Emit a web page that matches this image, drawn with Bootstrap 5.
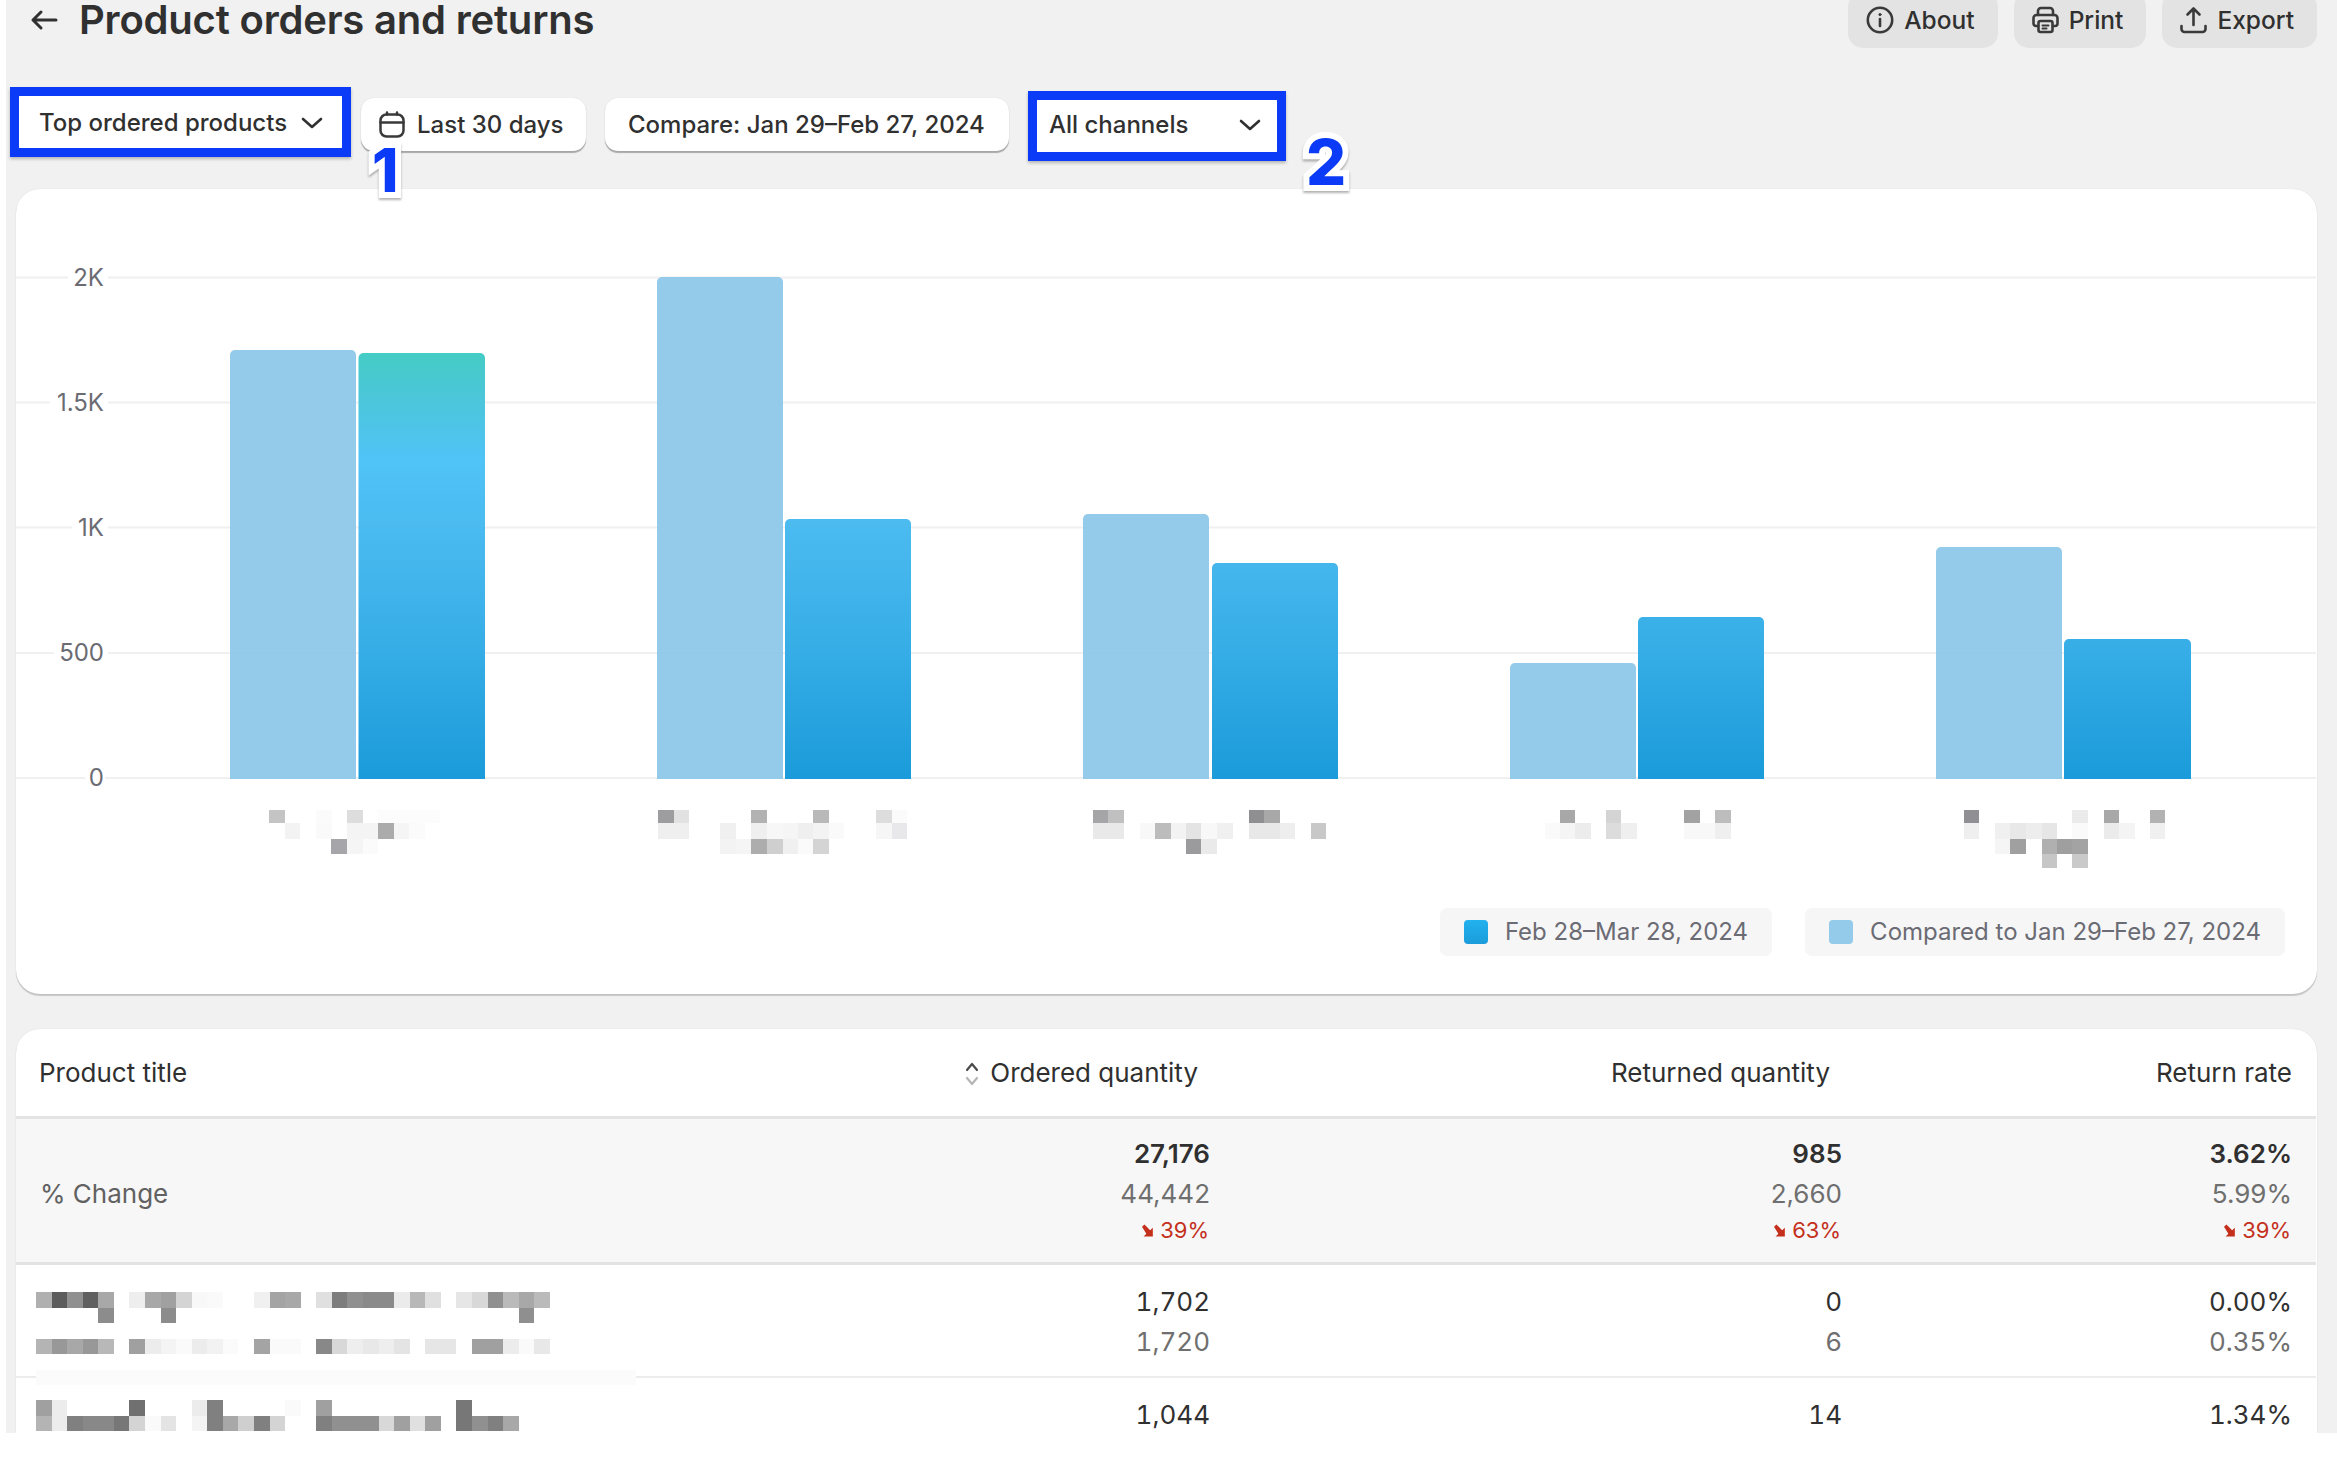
<!DOCTYPE html>
<html lang="en">
<head>
<meta charset="utf-8">
<title>Product orders and returns</title>
<link href="https://cdn.jsdelivr.net/npm/bootstrap@5.3.0/dist/css/bootstrap.min.css" rel="stylesheet">
<style>
html,body{height:100%;overflow:hidden;background:#fff;}
body{font-family:Inter,"Liberation Sans",sans-serif;color:#303030;}
.page-wrap{margin-left:6px;height:1433px;overflow:hidden;background:#f1f1f1;padding:0 20px 0 10px;}
.title-row{margin-top:-8px;height:56px;}
.back-icon{margin-left:14px;margin-right:21px;}
.page-title{font-size:40px;font-weight:600;letter-spacing:-.2px;margin:0;line-height:56px;color:#303030;}
.top-actions{gap:16px;}
.top-btn{background:#e3e3e3;border:0;border-radius:15px;height:56px;padding:0 23px 0 18px;font-size:24.5px;font-weight:500;color:#303030;line-height:32px;gap:10px;display:flex;align-items:center;}
.top-btn:hover{background:#e3e3e3;color:#303030;}
.filter-row{margin-top:39px;height:74px;margin-left:-6px;margin-bottom:28px;position:relative;}
.blue-frame{border:9px solid #0b3bf6;box-shadow:0 2px 3px rgba(0,0,0,.25);height:70px;}
.frame-one{width:341px;margin-right:10px;}
.frame-two{width:258px;margin-top:4px;margin-left:19px;}
.white-btn{background:#fff;border:0;border-radius:13px;box-shadow:0 2px 1px rgba(0,0,0,.3),0 0 1px rgba(0,0,0,.15);height:52px;padding:0 20px;font-size:24px;font-weight:500;color:#303030;display:flex;align-items:center;white-space:nowrap;}
.white-btn:hover{background:#fff;color:#303030;}
.frame-one .white-btn,.frame-two .white-btn{width:100%;height:52px;justify-content:space-between;box-shadow:none;border-radius:3px;}
.frame-one .white-btn{padding:2px 19px 0 20px;}
.frame-two .white-btn{padding:0 16px 2px 12px;}
.date-btn{margin-top:11px;width:225px;padding-left:18px;gap:12px;height:53px;}
.compare-btn{margin-top:11px;margin-left:19px;width:404px;height:53px;padding:0 0 0 23px;}
.anno-num{position:absolute;color:#0b3bf6;font-weight:800;-webkit-text-stroke:12px #fff;paint-order:stroke fill;filter:drop-shadow(0 2px 1px rgba(0,0,0,.3));line-height:1;font-family:Inter,"Liberation Sans",sans-serif;}
.anno-one{left:362px;top:53px;font-size:60px;}
.anno-two{left:1296px;top:44px;font-size:63px;}
.sheet{background:#fff;border-radius:24px;box-shadow:0 2px 1px rgba(0,0,0,.18),0 0 1px rgba(0,0,0,.15);overflow:hidden;}
.chart-sheet{height:805px;}
.chart-svg{display:block;width:2300px;height:700px;}
.axis-text{font-family:Inter,"Liberation Sans",sans-serif;font-size:24px;fill:#6b6b73;}
.legend-row{gap:33px;padding-right:32px;margin-top:19px;}
.legend-chip{background:#f6f6f7;border-radius:7px;height:48px;display:flex;align-items:center;font-size:24px;color:#6b6b73;padding:0 24px;gap:17px;}
.swatch{width:24px;height:24px;border-radius:4px;flex:none;}
.swatch-now{background:linear-gradient(#22b2ee,#1b9cdb);}
.swatch-prev{background:#94cbea;}
.table-sheet{margin-top:35px;height:520px;}
.data-table{--bs-table-bg:transparent;--bs-table-color:#303030;margin:0;table-layout:fixed;width:2300px;font-size:26px;}
.col-name{width:700px;}
.col-ordered{width:510px;}
.col-returned{width:632px;}
.col-rate{width:458px;}
.data-table th{font-weight:400;height:88px;vertical-align:middle;border-bottom:3px solid #e3e3e3;padding:0;}
.data-table td{padding:0;vertical-align:middle;border-bottom:2px solid #ececec;line-height:40px;}
.data-table .first-cell{padding-left:23px;}
.data-table .mosaic-cell{padding-left:20px;}
.data-table .num-a{padding-right:16px;}
.data-table .num-b{padding-right:16px;}
.data-table .num-c{padding-right:24px;}
.data-table th.num-a,.data-table th.num-b{padding-right:28px;}
.data-table .sum-row td{background:#f7f7f7;height:146px;border-bottom-width:3px;border-color:#e3e3e3;}
.data-table .sum-row .sum-label{color:#616161;padding-top:8px;padding-left:24px;}
.data-table .item-row td{height:114px;vertical-align:top;padding-top:17px;font-variant-numeric:tabular-nums;}
.prev-val{color:#6f6f6f;}
.strong-val{font-weight:600;}
.delta{color:#c4301c;font-size:22px;line-height:32px;display:flex;justify-content:flex-end;align-items:center;gap:5px;margin-right:1px;}
.mosaic{display:block;width:545px;height:62px;margin-top:10px;overflow:visible;}
.mosaic-b{height:31px;margin-top:5px;}
.sort-icon{margin-right:11px;vertical-align:-4px;}
</style>
</head>
<body>
<div class="page-wrap">
  <div class="d-flex justify-content-between align-items-start title-row">
    <div class="d-flex align-items-center">
      <svg class="back-icon" width="28" height="24" viewBox="0 0 28 24" fill="none" stroke="#303030" stroke-width="3" stroke-linecap="round" stroke-linejoin="round" aria-hidden="true"><path d="M26 12H3M11 4l-8 8 8 8"/></svg>
      <h1 class="page-title">Product orders and returns</h1>
    </div>
    <div class="d-flex top-actions">
      <button class="btn top-btn" type="button"><svg width="28" height="28" viewBox="0 0 28 28" fill="none" stroke="#3a3a3a" stroke-width="2.6" stroke-linecap="round" aria-hidden="true"><circle cx="14" cy="14" r="12.2"/><path d="M14 13v7"/><circle cx="14" cy="8.6" r="1.1" fill="#3a3a3a" stroke-width="1"/></svg>About</button>
      <button class="btn top-btn" type="button"><svg width="27" height="28" viewBox="0 0 27 28" fill="none" stroke="#3a3a3a" stroke-width="2.6" stroke-linejoin="round" stroke-linecap="round" aria-hidden="true"><path d="M6 9V5a3 3 0 0 1 3-3h9a3 3 0 0 1 3 3v4"/><path d="M6 20H4a2.5 2.5 0 0 1-2.5-2.5V12A3 3 0 0 1 4.500 9h18a3 3 0 0 1 3 3v5.500A2.500 2.500 0 0 1 23 20h-2"/><rect x="6.500" y="15" width="14" height="11" rx="2"/><path d="M10.500 19.500h6M10.500 22.500h4" stroke-width="2"/></svg>Print</button>
      <button class="btn top-btn" type="button"><svg width="27" height="28" viewBox="0 0 27 28" fill="none" stroke="#3a3a3a" stroke-width="2.6" stroke-linecap="round" stroke-linejoin="round" aria-hidden="true"><path d="M13.500 19V2.500M7.500 8.500l6-6 6 6"/><path d="M1.500 20v3a3 3 0 0 0 3 3h18a3 3 0 0 0 3-3v-3"/></svg>Export</button>
    </div>
  </div>

  <div class="d-flex align-items-start filter-row">
    <div class="blue-frame frame-one"><button class="btn white-btn" type="button">Top ordered products<svg width="22" height="12" viewBox="0 0 22 12" fill="none" stroke="#303030" stroke-width="2.6" stroke-linecap="round" stroke-linejoin="round" aria-hidden="true"><path d="M2 2l9 8 9-8"/></svg></button></div>
    <button class="btn white-btn date-btn" type="button"><svg width="26" height="27" viewBox="0 0 26 27" fill="none" stroke="#3a3a3a" stroke-width="2.5" stroke-linecap="round" aria-hidden="true"><rect x="1.500" y="3.500" width="23" height="22" rx="6"/><path d="M1.500 11.500h23M8 1.500v2M18 1.500v2"/></svg>Last 30 days</button>
    <button class="btn white-btn compare-btn" type="button">Compare: Jan 29–Feb 27, 2024</button>
    <div class="blue-frame frame-two"><button class="btn white-btn" type="button">All channels<svg width="22" height="12" viewBox="0 0 22 12" fill="none" stroke="#303030" stroke-width="2.6" stroke-linecap="round" stroke-linejoin="round" aria-hidden="true"><path d="M2 2l9 8 9-8"/></svg></button></div>
    <span class="anno-num anno-one">1</span>
    <span class="anno-num anno-two">2</span>
  </div>

  <div class="sheet chart-sheet">
    <svg class="chart-svg" viewBox="16 189 2300 700" aria-label="Bar chart">
      <defs>
        <linearGradient id="barFill" gradientUnits="userSpaceOnUse" x1="0" y1="353" x2="0" y2="778">
          <stop offset="0" stop-color="#45ccc5"/>
          <stop offset=".11" stop-color="#4bc6da"/>
          <stop offset=".25" stop-color="#50c3f7"/>
          <stop offset=".4" stop-color="#4bbbf0"/>
          <stop offset=".7" stop-color="#36ade6"/>
          <stop offset="1" stop-color="#1b9bda"/>
        </linearGradient>
        <clipPath id="plotClip"><rect x="16" y="189" width="2300" height="590"/></clipPath>
      </defs>
      <g stroke="#f0f0f1" stroke-width="2">
        <path d="M16 277.500H2316M16 402.500H2316M16 527.500H2316M16 653H2316M16 778H2316"/>
      </g>
      <g clip-path="url(#plotClip)">
        <g fill="#8cc7e8" fill-opacity=".93">
          <rect x="230" y="350" width="126" height="440" rx="5"/>
          <rect x="657" y="277" width="126" height="520" rx="5"/>
          <rect x="1083" y="514" width="126" height="280" rx="5"/>
          <rect x="1510" y="663" width="126" height="130" rx="5"/>
          <rect x="1936" y="547" width="126" height="250" rx="5"/>
        </g>
        <g fill="url(#barFill)">
          <rect x="358.500" y="353" width="126.500" height="440" rx="5"/>
          <rect x="785" y="519" width="126" height="280" rx="5"/>
          <rect x="1212" y="563" width="126" height="240" rx="5"/>
          <rect x="1638" y="617" width="126" height="180" rx="5"/>
          <rect x="2064" y="639" width="127" height="160" rx="5"/>
        </g>
      </g>
      <g fill="#fff">
        <rect x="68" y="264" width="40" height="28"/>
        <rect x="50" y="389" width="58" height="28"/>
        <rect x="72" y="514" width="36" height="28"/>
        <rect x="54" y="640" width="54" height="28"/>
        <rect x="85" y="764" width="20" height="28"/>
      </g>
      <g class="axis-text" text-anchor="end">
        <text x="104" y="286">2K</text>
        <text x="104" y="411">1.5K</text>
        <text x="104" y="536">1K</text>
        <text x="104" y="661">500</text>
        <text x="104" y="786">0</text>
      </g>
      <!-- blurred product names -->
      <g shape-rendering="crispEdges">
        <g>
          <rect x="269" y="810" width="16" height="13" fill="#c4c4c4"/><rect x="316" y="810" width="16" height="13" fill="#fbfbfb"/><rect x="347" y="810" width="16" height="13" fill="#ddd"/><rect x="378" y="810" width="62" height="13" fill="#fcfcfc"/>
          <rect x="285" y="823" width="15" height="16" fill="#f3f3f4"/><rect x="316" y="823" width="16" height="16" fill="#fafafa"/><rect x="347" y="823" width="31" height="16" fill="#f4f4f5"/><rect x="378" y="823" width="16" height="16" fill="#ababab"/><rect x="394" y="823" width="15" height="16" fill="#f5f5f5"/><rect x="409" y="823" width="16" height="16" fill="#fbfbfb"/>
          <rect x="331" y="839" width="16" height="15" fill="#a5a5aa"/><rect x="347" y="839" width="16" height="15" fill="#f5f5f5"/><rect x="363" y="839" width="15" height="15" fill="#fbfbfb"/>
        </g>
        <g>
          <rect x="658" y="810" width="16" height="13" fill="#9d9da0"/><rect x="674" y="810" width="15" height="13" fill="#e2e2e2"/><rect x="751" y="810" width="16" height="13" fill="#b2b2b2"/><rect x="813" y="810" width="16" height="13" fill="#b9b9b9"/><rect x="876" y="810" width="16" height="13" fill="#ddd"/><rect x="892" y="810" width="15" height="13" fill="#fbfbfb"/>
          <rect x="658" y="823" width="31" height="16" fill="#efefef"/><rect x="720" y="823" width="16" height="16" fill="#f0f0f0"/><rect x="751" y="823" width="16" height="16" fill="#efefef"/><rect x="767" y="823" width="16" height="16" fill="#f7f7f7"/><rect x="783" y="823" width="15" height="16" fill="#f5f5f5"/><rect x="798" y="823" width="15" height="16" fill="#efefef"/><rect x="813" y="823" width="16" height="16" fill="#f3f3f3"/><rect x="829" y="823" width="15" height="16" fill="#fafafa"/><rect x="876" y="823" width="16" height="16" fill="#f6f6f6"/><rect x="892" y="823" width="15" height="16" fill="#e8e8ea"/>
          <rect x="720" y="839" width="16" height="15" fill="#f3f3f3"/><rect x="736" y="839" width="15" height="15" fill="#f5f5f5"/><rect x="751" y="839" width="16" height="15" fill="#adadad"/><rect x="767" y="839" width="16" height="15" fill="#cfcfcf"/><rect x="783" y="839" width="15" height="15" fill="#f0f0f0"/><rect x="798" y="839" width="15" height="15" fill="#fafafa"/><rect x="813" y="839" width="16" height="15" fill="#d4d4d4"/>
        </g>
        <g>
          <rect x="1093" y="810" width="15" height="13" fill="#a5a5a8"/><rect x="1108" y="810" width="16" height="13" fill="#c0c0c0"/><rect x="1249" y="810" width="15" height="13" fill="#8f8f92"/><rect x="1264" y="810" width="16" height="13" fill="#a8a8a8"/>
          <rect x="1093" y="823" width="31" height="16" fill="#e9e9e9"/><rect x="1140" y="823" width="15" height="16" fill="#f8f8f8"/><rect x="1155" y="823" width="16" height="16" fill="#bcbcbc"/><rect x="1171" y="823" width="15" height="16" fill="#f3f3f3"/><rect x="1186" y="823" width="15" height="16" fill="#e4e4e4"/><rect x="1201" y="823" width="16" height="16" fill="#f8f8f8"/><rect x="1217" y="823" width="16" height="16" fill="#f0f0f0"/><rect x="1249" y="823" width="31" height="16" fill="#e8e8e8"/><rect x="1280" y="823" width="15" height="16" fill="#eee"/><rect x="1311" y="823" width="15" height="16" fill="#c8c8c8"/>
          <rect x="1186" y="839" width="15" height="15" fill="#9b9b9e"/><rect x="1201" y="839" width="16" height="15" fill="#eaeaea"/>
        </g>
        <g>
          <rect x="1560" y="810" width="15" height="13" fill="#a8a8a8"/><rect x="1606" y="810" width="15" height="13" fill="#d4d4d4"/><rect x="1684" y="810" width="16" height="13" fill="#a2a2a2"/><rect x="1715" y="810" width="16" height="13" fill="#bdbdbd"/>
          <rect x="1545" y="823" width="15" height="16" fill="#fafafa"/><rect x="1560" y="823" width="15" height="16" fill="#f5f5f5"/><rect x="1575" y="823" width="16" height="16" fill="#ececec"/><rect x="1606" y="823" width="15" height="16" fill="#dcdcdc"/><rect x="1621" y="823" width="16" height="16" fill="#efefef"/><rect x="1684" y="823" width="31" height="16" fill="#f8f8f8"/><rect x="1715" y="823" width="16" height="16" fill="#efefef"/>
        </g>
        <g>
          <rect x="1964" y="810" width="15" height="13" fill="#8f8f94"/><rect x="2072" y="810" width="16" height="13" fill="#ebebeb"/><rect x="2104" y="810" width="15" height="13" fill="#a8a8a8"/><rect x="2150" y="810" width="15" height="13" fill="#b2b2b2"/>
          <rect x="1964" y="823" width="15" height="16" fill="#efefef"/><rect x="1995" y="823" width="15" height="16" fill="#f0f0f0"/><rect x="2010" y="823" width="16" height="16" fill="#e8e8e8"/><rect x="2026" y="823" width="16" height="16" fill="#ededed"/><rect x="2042" y="823" width="15" height="16" fill="#e6e6e6"/><rect x="2072" y="823" width="16" height="16" fill="#fafafa"/><rect x="2104" y="823" width="15" height="16" fill="#ebebeb"/><rect x="2119" y="823" width="16" height="16" fill="#f4f4f4"/><rect x="2150" y="823" width="15" height="16" fill="#f0f0f0"/>
          <rect x="1995" y="839" width="15" height="15" fill="#f5f5f5"/><rect x="2010" y="839" width="16" height="15" fill="#a0a0a0"/><rect x="2042" y="839" width="15" height="15" fill="#b0b0b0"/><rect x="2057" y="839" width="15" height="15" fill="#9f9f9f"/><rect x="2072" y="839" width="16" height="15" fill="#a3a3a3"/>
          <rect x="2042" y="854" width="15" height="14" fill="#c6c6c6"/><rect x="2072" y="854" width="16" height="14" fill="#c9c9c9"/>
        </g>
      </g>
    </svg>
    <div class="d-flex justify-content-end legend-row">
      <div class="legend-chip"><span class="swatch swatch-now"></span>Feb 28–Mar 28, 2024</div>
      <div class="legend-chip"><span class="swatch swatch-prev"></span>Compared to Jan 29–Feb 27, 2024</div>
    </div>
  </div>

  <div class="sheet table-sheet">
    <table class="table data-table">
      <colgroup><col class="col-name"><col class="col-ordered"><col class="col-returned"><col class="col-rate"></colgroup>
      <thead>
        <tr>
          <th class="first-cell">Product title</th>
          <th class="text-end num-a"><svg class="sort-icon" width="14" height="24" viewBox="0 0 14 24" fill="none" stroke-width="2.2" stroke-linecap="round" stroke-linejoin="round" aria-hidden="true"><path d="M2 8l5-6 5 6" stroke="#4a4a4a"/><path d="M2 16l5 6 5-6" stroke="#b5b5b5"/></svg>Ordered quantity</th>
          <th class="text-end num-b">Returned quantity</th>
          <th class="text-end num-c">Return rate</th>
        </tr>
      </thead>
      <tbody>
        <tr class="sum-row">
          <td class="first-cell sum-label">% Change</td>
          <td class="text-end num-a"><div class="strong-val">27,176</div><div class="prev-val">44,442</div><div class="delta"><svg width="13" height="13" viewBox="0 0 12 12" aria-hidden="true"><path d="M0 2.500 2.300.5 7.500 5.700 10 3.500V11.500H1.500L4 9 0 2.500Z" fill="#c4301c"/></svg>39%</div></td>
          <td class="text-end num-b"><div class="strong-val">985</div><div class="prev-val">2,660</div><div class="delta"><svg width="13" height="13" viewBox="0 0 12 12" aria-hidden="true"><path d="M0 2.500 2.300.5 7.500 5.700 10 3.500V11.500H1.500L4 9 0 2.500Z" fill="#c4301c"/></svg>63%</div></td>
          <td class="text-end num-c"><div class="strong-val">3.62%</div><div class="prev-val">5.99%</div><div class="delta"><svg width="13" height="13" viewBox="0 0 12 12" aria-hidden="true"><path d="M0 2.500 2.300.5 7.500 5.700 10 3.500V11.500H1.500L4 9 0 2.500Z" fill="#c4301c"/></svg>39%</div></td>
        </tr>
        <tr class="item-row">
          <td class="mosaic-cell">
            <svg class="mosaic" viewBox="0 0 35 4" preserveAspectRatio="none" shape-rendering="crispEdges" aria-hidden="true">
              <g>
                <rect x="0" width="1" height="1" fill="#b0b0b0"/><rect x="1" width="1" height="1" fill="#5c5c5c"/><rect x="2" width="1" height="1" fill="#909090"/><rect x="3" width="1" height="1" fill="#606060"/><rect x="4" width="1" height="1" fill="#a8a8a8"/><rect x="6" width="1" height="1" fill="#eee"/><rect x="7" width="1" height="1" fill="#a8a8a8"/><rect x="8" width="1" height="1" fill="#a0a0a0"/><rect x="9" width="1" height="1" fill="#d4d4d4"/><rect x="10" width="1" height="1" fill="#f8f8f8"/><rect x="11" width="1" height="1" fill="#fafafa"/><rect x="14" width="1" height="1" fill="#f0f0f0"/><rect x="15" width="1" height="1" fill="#a4a4a4"/><rect x="16" width="1" height="1" fill="#a8a8a8"/><rect x="18" width="1" height="1" fill="#e0e0e0"/><rect x="19" width="1" height="1" fill="#7d7d7d"/><rect x="20" width="1" height="1" fill="#909090"/><rect x="21" width="2" height="1" fill="#8a8a8a"/><rect x="23" width="1" height="1" fill="#ebebeb"/><rect x="24" width="1" height="1" fill="#b8b8b8"/><rect x="25" width="1" height="1" fill="#e0e0e0"/><rect x="27" width="1" height="1" fill="#e6e6e6"/><rect x="28" width="1" height="1" fill="#d8d8d8"/><rect x="29" width="1" height="1" fill="#909090"/><rect x="30" width="1" height="1" fill="#bababa"/><rect x="31" width="1" height="1" fill="#a8a8a8"/><rect x="32" width="1" height="1" fill="#bababa"/>
              </g>
              <g>
                <rect x="4" y="1" width="1" height="1" fill="#8c8c8c"/><rect x="8" y="1" width="1" height="1" fill="#8c8c8c"/><rect x="31" y="1" width="1" height="1" fill="#8f8f8f"/>
              </g>
              <g>
                <rect x="0" y="3" width="1" height="1" fill="#b4b4b4"/><rect x="1" y="3" width="1" height="1" fill="#989898"/><rect x="2" y="3" width="1" height="1" fill="#a8a8a8"/><rect x="3" y="3" width="1" height="1" fill="#989898"/><rect x="4" y="3" width="1" height="1" fill="#b8b8b8"/><rect x="6" y="3" width="1" height="1" fill="#a0a0a0"/><rect x="7" y="3" width="1" height="1" fill="#ececec"/><rect x="8" y="3" width="1" height="1" fill="#f4f4f4"/><rect x="9" y="3" width="1" height="1" fill="#fafafa"/><rect x="10" y="3" width="1" height="1" fill="#ececec"/><rect x="11" y="3" width="1" height="1" fill="#f2f2f2"/><rect x="12" y="3" width="1" height="1" fill="#fbfbfb"/><rect x="14" y="3" width="1" height="1" fill="#a4a4a4"/><rect x="15" y="3" width="2" height="1" fill="#fafafa"/><rect x="18" y="3" width="1" height="1" fill="#888"/><rect x="19" y="3" width="1" height="1" fill="#d8d8d8"/><rect x="20" y="3" width="1" height="1" fill="#eee"/><rect x="21" y="3" width="1" height="1" fill="#e8e8e8"/><rect x="22" y="3" width="1" height="1" fill="#eee"/><rect x="23" y="3" width="1" height="1" fill="#e4e4e4"/><rect x="25" y="3" width="2" height="1" fill="#e6e6e6"/><rect x="28" y="3" width="2" height="1" fill="#a0a0a0"/><rect x="30" y="3" width="1" height="1" fill="#ececec"/><rect x="31" y="3" width="1" height="1" fill="#fafafa"/><rect x="32" y="3" width="1" height="1" fill="#e8e8e8"/>
              </g>
              <rect x="0" y="5" width="38.500" height="1" fill="#fbfbfb"/>
            </svg>
          </td>
          <td class="text-end num-a"><div>1,702</div><div class="prev-val">1,720</div></td>
          <td class="text-end num-b"><div>0</div><div class="prev-val">6</div></td>
          <td class="text-end num-c"><div>0.00%</div><div class="prev-val">0.35%</div></td>
        </tr>
        <tr class="item-row">
          <td class="mosaic-cell">
            <svg class="mosaic mosaic-b" viewBox="0 0 35 2" preserveAspectRatio="none" shape-rendering="crispEdges" aria-hidden="true">
              <g>
                <rect x="0" width="1" height="1" fill="#a0a0a0"/><rect x="1" width="1" height="1" fill="#ececec"/><rect x="6" width="1" height="1" fill="#707070"/><rect x="10" width="1" height="1" fill="#ececec"/><rect x="11" width="1" height="1" fill="#808080"/><rect x="16" width="1" height="1" fill="#fafafa"/><rect x="18" width="1" height="1" fill="#a0a0a0"/><rect x="27" width="1" height="1" fill="#777"/>
              </g>
              <g>
                <rect x="0" y="1" width="1" height="1" fill="#b4b4b4"/><rect x="1" y="1" width="1" height="1" fill="#ececec"/><rect x="2" y="1" width="1" height="1" fill="#808080"/><rect x="3" y="1" width="2" height="1" fill="#888"/><rect x="5" y="1" width="1" height="1" fill="#777"/><rect x="6" y="1" width="1" height="1" fill="#d4d4d4"/><rect x="7" y="1" width="1" height="1" fill="#fafafa"/><rect x="8" y="1" width="1" height="1" fill="#e4e4e4"/><rect x="10" y="1" width="1" height="1" fill="#f4f4f4"/><rect x="11" y="1" width="1" height="1" fill="#808080"/><rect x="12" y="1" width="1" height="1" fill="#a8a8a8"/><rect x="13" y="1" width="1" height="1" fill="#cfcfcf"/><rect x="14" y="1" width="1" height="1" fill="#808080"/><rect x="15" y="1" width="1" height="1" fill="#d4d4d4"/><rect x="18" y="1" width="1" height="1" fill="#808080"/><rect x="19" y="1" width="3" height="1" fill="#909090"/><rect x="22" y="1" width="1" height="1" fill="#d8d8d8"/><rect x="23" y="1" width="1" height="1" fill="#a0a0a0"/><rect x="24" y="1" width="1" height="1" fill="#e0e0e0"/><rect x="25" y="1" width="1" height="1" fill="#a0a0a0"/><rect x="27" y="1" width="1" height="1" fill="#777"/><rect x="28" y="1" width="1" height="1" fill="#909090"/><rect x="29" y="1" width="1" height="1" fill="#808080"/><rect x="30" y="1" width="1" height="1" fill="#a8a8a8"/>
              </g>
            </svg>
          </td>
          <td class="text-end num-a"><div>1,044</div></td>
          <td class="text-end num-b"><div>14</div></td>
          <td class="text-end num-c"><div>1.34%</div></td>
        </tr>
      </tbody>
    </table>
  </div>
</div>
<script src="https://cdn.jsdelivr.net/npm/bootstrap@5.3.0/dist/js/bootstrap.bundle.min.js"></script>
</body>
</html>
